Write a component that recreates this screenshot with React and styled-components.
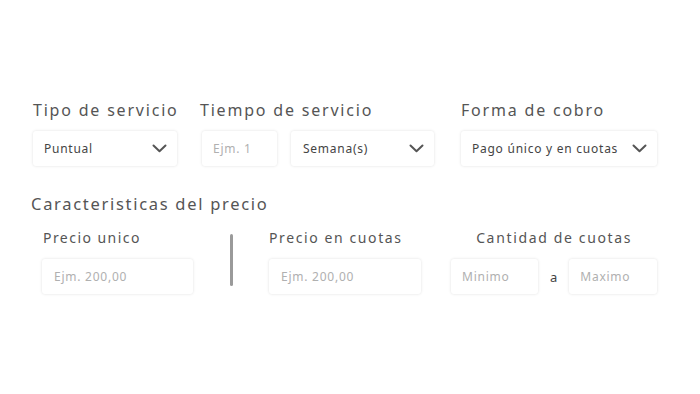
import React from "react";
import styled, { createGlobalStyle } from "styled-components";

const Global = createGlobalStyle`
  html, body { margin: 0; padding: 0; background: #fff; }
  body { font-family: "Noto Sans", "DejaVu Sans", sans-serif; color: #555; }
`;

const Page = styled.div`
  width: 700px;
  height: 394px;
  box-sizing: border-box;
  padding: 99px 0 0 31px;
`;

const Row = styled.div`
  display: flex;
  align-items: flex-start;
  margin-left: ${(p) => p.$indent || 0}px;
`;

const Field = styled.div`
  display: flex;
  flex-direction: column;
  align-items: ${(p) => (p.$center ? "center" : "flex-start")};
  width: ${(p) => (p.$w ? p.$w + "px" : "auto")};
`;

const Label = styled.div`
  font-size: 16px;
  line-height: 22px;
  letter-spacing: 1.8px;
  color: #555;
  margin-bottom: 10px;
  margin-left: ${(p) => p.$ml || 0}px;
  white-space: nowrap;
`;

const SubLabel = styled.div`
  font-size: 14px;
  line-height: 20px;
  letter-spacing: ${(p) => p.$ls || 1.5}px;
  color: #555;
  margin-bottom: 11px;
  margin-left: ${(p) => p.$ml || 0}px;
  white-space: nowrap;
`;

const Heading = styled.div`
  font-size: 16.5px;
  line-height: 22px;
  letter-spacing: 1.7px;
  color: #555;
  margin: 27px 0 13px;
`;

const Box = styled.div`
  box-sizing: border-box;
  width: ${(p) => p.$w}px;
  height: 35px;
  background: #fff;
  border-radius: 3px;
  box-shadow: 0 0 3px rgba(0, 0, 0, 0.13);
  display: flex;
  align-items: center;
  justify-content: space-between;
  padding: 0 ${(p) => p.$pr ?? 10}px 0 ${(p) => p.$pl ?? 11}px;
  font-size: 12px;
  color: ${(p) => (p.$placeholder ? "#b0b0b0" : "#444")};
  letter-spacing: 0.75px;
  white-space: nowrap;
`;

const Boxes = styled.div`
  display: flex;
  align-items: center;
  gap: ${(p) => p.$gap || 14}px;
`;

const Divider = styled.div`
  width: 3px;
  height: 52px;
  background: #9a9a9a;
  border-radius: 2px;
  margin: 6px 0 0 1px;
`;

const Conj = styled.span`
  font-size: 13px;
  color: #444;
`;

const Chevron = () => (
  <svg width="15" height="9" viewBox="0 0 15 9" fill="none">
    <path d="M1.5 1.5L7.5 7.2L13.5 1.5" stroke="#555" strokeWidth="2" strokeLinecap="round" strokeLinejoin="round" />
  </svg>
);

export default function App() {
  return (
    <>
      <Global />
      <Page>
        <Row $indent={2}>
          <Field $w={169}>
            <Label>Tipo de servicio</Label>
            <Box $w={144} $pl={11} $pr={10}>
              Puntual <Chevron />
            </Box>
          </Field>
          <Field $w={259}>
            <Label $ml={-2}>Tiempo de servicio</Label>
            <Boxes $gap={14}>
              <Box $w={75} $placeholder $pl={11}>Ejm. 1</Box>
              <Box $w={143} $pl={12} $pr={10}>
                Semana(s) <Chevron />
              </Box>
            </Boxes>
          </Field>
          <Field>
            <Label>Forma de cobro</Label>
            <Box $w={196} $pl={11} $pr={10}>
              Pago único y en cuotas <Chevron />
            </Box>
          </Field>
        </Row>
        <Heading>Caracteristicas del precio</Heading>
        <Row $indent={11}>
          <Field $w={187}>
            <SubLabel $ml={1} $ls={1.45}>Precio unico</SubLabel>
            <Box $w={151} $placeholder $pl={12}>Ejm. 200,00</Box>
          </Field>
          <Field $w={40}>
            <Divider />
          </Field>
          <Field $w={182}>
            <SubLabel $ls={1.6}>Precio en cuotas</SubLabel>
            <Box $w={152} $placeholder $pl={12}>Ejm. 200,00</Box>
          </Field>
          <Field $center>
            <SubLabel $ls={1.65}>Cantidad de cuotas</SubLabel>
            <Boxes $gap={12}>
              <Box $w={87} $placeholder $pl={11}>Minimo</Box>
              <Conj>a</Conj>
              <Box $w={88} $placeholder $pl={11}>Maximo</Box>
            </Boxes>
          </Field>
        </Row>
      </Page>
    </>
  );
}
